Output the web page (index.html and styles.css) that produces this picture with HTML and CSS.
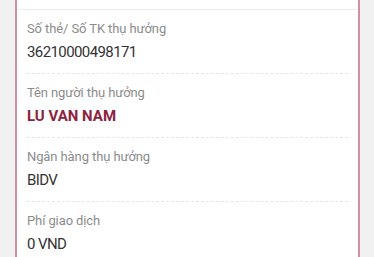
FILE: index.html
```html
<!DOCTYPE html>
<html lang="vi">
<head>
<meta charset="utf-8">
<link rel="stylesheet" href="styles.css">
</head>
<body>
<div class="card">
  <div class="card-top"></div>
  <div class="row">
    <div class="label">Số thẻ/ Số TK thụ hưởng</div>
    <div class="value">36210000498171</div>
  </div>
  <div class="row">
    <div class="label">Tên người thụ hưởng</div>
    <div class="value value-name">LU VAN NAM</div>
  </div>
  <div class="row">
    <div class="label">Ngân hàng thụ hưởng</div>
    <div class="value">BIDV</div>
  </div>
  <div class="row">
    <div class="label">Phí giao dịch</div>
    <div class="value">0 VND</div>
  </div>
</div>
</body>
</html>
```
FILE: styles.css
```css
html, body {
  margin: 0;
  padding: 0;
}
body {
  background: #f1f1f1;
  font-family: Roboto, "Noto Sans", sans-serif;
  width: 374px;
  height: 257px;
  overflow: hidden;
}
.card {
  margin: 0 14px 0 15px;
  background: #ffffff;
  border-left: 2px solid #cf91a2;
  border-right: 2px solid #cf91a2;
  height: 300px;
}
.card-top {
  height: 9px;
  border-bottom: 1px solid #ececec;
}
.row {
  margin: 0 10px;
  padding: 10px 0 11px;
  border-bottom: 1px dashed #e6e6e6;
}
.label {
  font-size: 13px;
  line-height: 18px;
  letter-spacing: -0.1px;
  color: #8c8c8c;
}
.value {
  margin-top: 4px;
  font-size: 15px;
  line-height: 20px;
  letter-spacing: -0.6px;
  color: #333333;
}
.value-name {
  letter-spacing: 0;
  font-weight: 700;
  color: #8e2240;
}
```
